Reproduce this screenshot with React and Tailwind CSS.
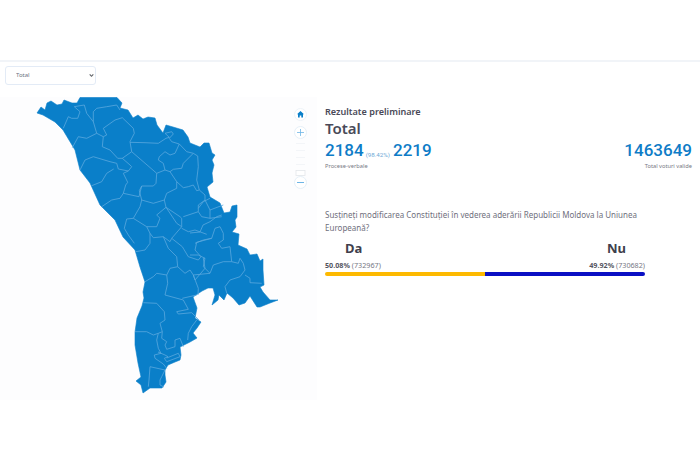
const outline = "M37,113 L39,110 L41,107 L45,110 L47,103 L51,101 L57,105 L62,104 L64,100 L72,103 L77,103 L80,97.5 L117,97.5 L122,103 L120,108 L128,110 L133,118 L138,115 L143,119 L148,117 L155,118 L157,125 L163,133 L166,125 L173,127 L183,130 L188,137 L190,143 L200,147 L204,143 L209,143 L212,153 L215,155 L212,160 L214,165 L212,173 L213,182 L207,187 L210,197 L220,203 L224,213 L230,212 L232,206 L237,205 L237,217 L235,220 L236,227 L232,232 L239,234 L238,245 L247,249 L250,255 L257,254 L260,261 L263,259 L263,270 L264,285 L260,287 L263,292 L270,300 L278,300 L270,303 L260,307 L257,307 L250,296 L245,303 L239,305 L233,298 L227,293 L224,300 L219,295 L218,300 L212,305 L215,295 L213,288 L208,288 L202,291 L193,297 L197,308 L195,318 L201,322 L197,328 L193,333 L197,338 L190,342 L180,347 L181,355 L180,360 L175,362 L168,365 L165,370 L165,375 L166,382 L162,388 L150,388 L143,393 L141,385 L136,381 L141,377 L138,363 L135,345 L135,332 L137,318 L142,306 L144,298 L143,292 L145,282 L140,267 L135,250 L123,237 L115,220 L100,205 L90,183 L80,170 L75,150 L63,130 L55,122 L43,115 Z";

const borders = [
  "M63.3,128.3 L68.3,116.7 L71.7,118.3 L77.7,118.3 L80,111.7 L74.3,106.7 L80,105.7 L84.3,105 L86.7,113.3 L93.3,121.7 L93.3,111.7 L96.7,108.3 L106.7,106.7 L116.7,105 L120,110",
  "M72.3,147.7 L78.3,136.7 L86.7,138.3 L96.7,133.3 L93.3,121.7",
  "M96.7,133.3 L103.3,136.7 L106.7,135 L103.3,128.3 L115,120 L122.3,117.7 L133.3,128.3 L134.3,133.3 L130,141.7 L131.7,151.7 L122.3,158.3",
  "M103.3,136.7 L102.3,146.7 L110,150 L117.7,158.3 L122.3,158.3 L130,165 L131.7,166.7 L128.3,171 L118.3,169 L116.7,163.3 L110,161.7 L93.3,156.7 L85,160 L80,170",
  "M131.7,151.7 L156.7,173.3 L156,183.3 L153.3,186 L141.7,186 L139.3,190.7 L141.7,200 L153.3,203.3 L164.3,200 L166.7,193.3 L176.7,188.3 L176.7,181.7",
  "M141.7,186 L139,196.7 L123.3,193.3 L125.7,185 L127.7,182.3 L123.3,173.3 L128.3,171",
  "M113.7,169 L106.7,173.3 L101.7,181.7 L91.7,185.7",
  "M123.3,193.3 L120,198.3 L111.7,200 L101.7,206.7",
  "M130,142.3 L145,142.7 L158.3,143.3 L166,138.3 L169.3,137.3 L165,133.3 L171.7,131.7 L173.3,134 L169.3,138.3 L171.7,141.7 L179.3,144 L186.7,151.7 L193.3,153.3",
  "M179.3,144 L175,153.3 L170,155 L165,151.7 L159.3,156.7 L158.3,160 L163.3,163.3 L165,170 L170,171.7 L173.3,169.3 L181.7,168.3 L183.3,163.3 L193.3,153.3",
  "M193.3,153.3 L197.7,156 L198.3,166.7 L196.7,180 L199.3,190 L196.7,190.7 L193.3,185 L188.3,186.7 L183.3,187.7 L176.7,181.7 L170,171.7",
  "M156.7,173.3 L165,170",
  "M164.3,200 L166,207.3 L180,216.7 L181.7,218.3 L181.7,226.7",
  "M199.3,190 L205,195 L205,200 L198.3,205 L198.3,211.7 L183.3,216.7",
  "M205,200 L210,210 L223.3,205",
  "M198.3,211.7 L201.7,216.7 L210,218.3 L221.7,216.7",
  "M210,210 L210,218.3",
  "M141.7,200 L140,206.7 L133.3,218.3 L126.7,219 L124.3,228.3 L128.3,235 L134.3,243.3",
  "M133.3,218.3 L146.7,226.7 L150,233.3 L150,243.3 L145,250 L135.7,251.7",
  "M146.7,226.7 L156.7,226.7 L160,218.3 L156.7,215 L166,207.3",
  "M166,207.3 L176.7,223.3 L181.7,226.7 L171.7,238.3 L170,241.7 L163.3,236.7 L153.3,237.7 L150,233.3",
  "M171.7,238.3 L182.3,246.7 L188.3,256.7 L198.3,260 L201,256.7",
  "M163.3,236.7 L168.3,248.3 L176.7,256.7 L177.7,266.7 L170,268.3 L166.7,275 L167.7,283.3 L165,295",
  "M177.7,266.7 L185,273.3 L190,270 L193.3,275 L195,280 L205,268.3 L203.3,258.3 L205,258.3",
  "M145,281.7 L153.3,276.7 L156.7,273.3 L166.7,275",
  "M181.7,228.3 L188.3,231.7 L195,230 L206.7,234.3",
  "M211.7,238.3 L196.7,242.3 L195,250 L201,256.7",
  "M198.3,208.3 L203.3,201.7 L210,198.3",
  "M190,233 L200,232 L203,225 L210,221.7 L216.7,216.7 L221.7,215",
  "M195,243.3 L203.3,240 L211.7,238.3 L215,228.3 L220,226.7 L223.3,233.3 L223.3,240 L218.3,243.3 L221.7,248.3 L230,246.7 L231.7,261.7 L223.3,261.7 L213.3,265 L210,273.3 L203.3,266.7 L205,258.3 L198.3,255 L190,255",
  "M231.7,261.7 L238.3,263.3 L240,258.3 L243.3,263.3 L245,270 L240,276.7 L230,280 L225,286.7 L226.7,293",
  "M245,275 L250,278.3 L250,282.7 L261.7,283.3",
  "M210,273.3 L193.3,275 L198.3,288.3 L198,295",
  "M143.3,302.7 L156.7,303.3 L164.3,311.7 L165,320 L160,323.3 L162.3,331.7 L158.3,333.3 L156.7,340 L158.3,348.3 L161,353.3 L154.3,355 L155,358.3 L163.3,364 L166.7,368.3",
  "M135,331.7 L146.7,331.7 L153.3,335 L158.3,333.3",
  "M162.3,331.7 L161.7,338.3 L166.7,341.7 L165,345 L166.7,349.3 L175,346.7 L175,340 L180,338.3 L183.3,346.7",
  "M165,295 L183.3,300 L188.3,309.3 L176.7,311.7 L178.3,314 L191.7,312.7 L199,320",
  "M182.3,298.3 L196.7,295",
  "M196.7,320 L191.7,326.7 L188.3,333.3 L187.7,340",
  "M158,352 L165,355 L168,356.7 L164.3,358.3 L166.7,361.7 L180,356.7 L178.3,353.3 L166.7,358",
  "M150,366.7 L165,370 L161.7,376.7 L160,380 L160,385 L164,387",
  "M150,366.7 L149,380 L148.3,386.7",
];

export default function App() {
  return (
    <div className="w-[700px] h-[466px] bg-white font-['Noto_Sans',sans-serif] overflow-hidden">
      <div className="h-[62px] border-b-2 border-[#f1f4f8]" />
      <div className="pl-[5px] pt-[4px] pb-[12px]">
        <div className="relative w-[91px] h-[19px]">
          <select className="block w-full h-full appearance-none bg-white border border-[#e3ebf6] rounded-[3px] pl-[10px] text-[6px] text-[#6e7280] outline-none">
            <option>Total</option>
          </select>
          <svg className="absolute right-[2px] top-[7px] pointer-events-none" width="5" height="5" viewBox="0 0 5 5" fill="none">
            <path d="M0.7,1.3 L2.5,3.3 L4.3,1.3" stroke="#5f6368" strokeWidth="1.1" />
          </svg>
        </div>
      </div>
      <div className="flex">
        <div className="w-[317px] h-[303px] bg-[#fdfdfe] shrink-0">
          <svg className="block" width="317" height="303" viewBox="0 97 317 303" fill="none">
            <path d={outline} fill="#0a7fc9" stroke="#0a7fc9" strokeWidth="0.6" strokeLinejoin="round" />
            {borders.map((d) => (
              <path key={d} d={d} stroke="#5ba8de" strokeWidth="0.8" strokeLinejoin="round" />
            ))}
            <circle cx="300.5" cy="114.5" r="6" fill="#fff" stroke="#eef3f8" />
            <path d="M300.5,111 L304,114.3 L303,114.3 L303,117.5 L301.3,117.5 L301.3,115.5 L299.7,115.5 L299.7,117.5 L298,117.5 L298,114.3 L297,114.3 Z" fill="#0a7fc9" />
            <circle cx="300.5" cy="132.5" r="6" fill="#fff" stroke="#e6f0f8" />
            <path d="M300.5,129 V136 M297,132.5 H304" stroke="#6db5e6" strokeWidth="0.8" />
            <path d="M296,143.5 H305 M296,150.5 H305 M296,157.5 H305 M296,164.5 H305" stroke="#f3f5f8" />
            <rect x="296" y="170.5" width="9" height="5" fill="#fff" stroke="#e3e6ea" strokeWidth="0.8" />
            <circle cx="300.5" cy="182.5" r="6" fill="#fff" stroke="#e6f0f8" />
            <path d="M297,182.5 H304" stroke="#6db5e6" strokeWidth="1" />
          </svg>
        </div>
        <div className="ml-[8px] w-[367px] pt-[9px]">
          <div className="text-[9.1px] leading-[11px] font-semibold text-[#4a4a58]">Rezultate preliminare</div>
          <div className="mt-[3px] text-[15px] leading-[16px] font-semibold text-[#4a4a58]">Total</div>
          <div className="flex justify-between items-start mt-[3px]">
            <div>
              <div className="flex items-end h-[22px] font-['Roboto',sans-serif] text-[#0e7cc7]">
                <span className="text-[17px] leading-[22px] font-medium">2184</span>
                <span className="text-[6.2px] leading-[10px] mb-[1px] ml-[2px] mr-[3px] text-[#6ea9d6]">(98.42%)</span>
                <span className="text-[17px] leading-[22px] font-medium">2219</span>
              </div>
              <div className="mt-[1px] text-[5.7px] leading-[9px] text-[#777884]">Procese-verbale</div>
            </div>
            <div className="text-right">
              <div className="h-[22px] font-['Roboto',sans-serif] text-[17px] leading-[22px] font-medium text-[#0e7cc7]">1463649</div>
              <div className="mt-[1px] text-[5.7px] leading-[9px] text-[#777884]">Total voturi valide</div>
            </div>
          </div>
          <div className="w-[320px] mt-[37px]">
            <p className="text-[8px] leading-[13px] text-[#6f6f7d]">Susțineți modificarea Constituției în vederea aderării Republicii Moldova la Uniunea Europeană?</p>
            <div className="flex justify-between mt-[5px]">
              <div className="ml-[20px] text-[13px] leading-[18px] font-bold text-[#3f3f4c]">Da</div>
              <div className="mr-[19px] text-[13px] leading-[18px] font-bold text-[#3f3f4c]">Nu</div>
            </div>
            <div className="flex justify-between mt-[3px] text-[7.2px] leading-[10px] text-[#777884]">
              <div><span className="font-bold text-[#55555f]">50.08%</span> (732967)</div>
              <div><span className="font-bold text-[#55555f]">49.92%</span> (730682)</div>
            </div>
            <div className="flex h-[4px] mt-[2px] rounded-full overflow-hidden">
              <div className="w-1/2 bg-[#fdb900]" />
              <div className="w-1/2 bg-[#0a10c4]" />
            </div>
          </div>
        </div>
      </div>
    </div>
  );
}
